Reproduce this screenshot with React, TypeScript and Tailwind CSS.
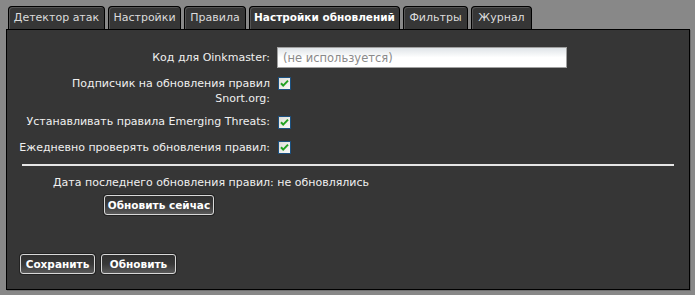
import React from 'react';

const FONT = { fontFamily: '"DejaVu Sans", Verdana, sans-serif' };

const TABS = [
  { label: 'Детектор атак', w: 'w-[97px]' },
  { label: 'Настройки', w: 'w-[73px]' },
  { label: 'Правила', w: 'w-[62px]' },
  { label: 'Настройки обновлений', w: 'w-[151px]', active: true },
  { label: 'Фильтры', w: 'w-[65px]' },
  { label: 'Журнал', w: 'w-[61px]' },
];

const Check: React.FC = () => (
  <svg width="13" height="13" viewBox="0 0 13 13" className="block">
    <defs>
      <linearGradient id="cbg" x1="0" y1="0" x2="1" y2="1">
        <stop offset="0" stopColor="#dcdcd6" />
        <stop offset="1" stopColor="#fbfbf9" />
      </linearGradient>
    </defs>
    <rect x="0.5" y="0.5" width="12" height="12" fill="url(#cbg)" stroke="#1c5180" />
    <path d="M3 6.2 L5.2 8.6 L10 3.6" fill="none" stroke="#21a121" strokeWidth="2" />
  </svg>
);

const Btn: React.FC<{ children: React.ReactNode; w: string }> = ({ children, w }) => (
  <button
    className={`${w} h-[20px] rounded-[3px] border border-[#d8d8d8] bg-gradient-to-b from-[#303030] via-[#383838] to-[#5a5a5a] text-[10.5px] font-bold text-white leading-none shadow-[0_0_0_1px_#222]`}
  >
    {children}
  </button>
);

const Row: React.FC<{ label: React.ReactNode; children: React.ReactNode; className?: string; center?: boolean }> = ({
  label,
  children,
  className = '',
  center,
}) => (
  <div className={`flex ${center ? 'items-center' : 'items-start'} ${className}`}>
    <div className="w-[264px] pr-[1px] text-right leading-[15px] text-[#f0f0f0]">{label}</div>
    <div className={`ml-[6px] ${center ? '' : 'pt-[1px] pl-[1px]'}`}>{children}</div>
  </div>
);

export default function App() {
  return (
    <div className="w-[695px] h-[295px] bg-[#888888] pt-[6px] pl-[6px] text-[11px]" style={FONT}>
      {/* tabs */}
      <div className="flex gap-[3px] pl-[2px]">
        {TABS.map((t) => (
          <div
            key={t.label}
            className={`${t.w} h-[23px] rounded-t-[4px] border border-b-0 border-black bg-[#363636] shadow-[inset_1px_1px_0_#555] flex items-center justify-center whitespace-nowrap ${
              t.active ? 'font-bold text-[10.5px] text-white' : 'text-[#dcdcdc]'
            }`}
          >
            {t.label}
          </div>
        ))}
      </div>

      {/* panel */}
      <div className="w-[684px] h-[261px] border border-black bg-[#363636] shadow-[1px_1px_0_#6e6e6e] flex flex-col">
        <Row label="Код для Oinkmaster:" className="mt-[17px] h-[21px]" center>
          <input
            readOnly
            placeholder="(не используется)"
            className="w-[290px] h-[21px] border border-[#a0a0a0] bg-gradient-to-b from-[#dfe4e8] via-white to-white px-[5px] text-[11.5px] text-black placeholder:text-[#8a8a8a] outline-none"
            style={FONT}
          />
        </Row>

        <Row label={<>Подписчик на обновления правил<br />Snort.org:</>} className="mt-[8px]">
          <Check />
        </Row>

        <Row label="Устанавливать правила Emerging Threats:" className="mt-[8px]">
          <div className="pt-[1px]">
            <Check />
          </div>
        </Row>

        <Row label="Ежедневно проверять обновления правил:" className="mt-[11px]">
          <Check />
        </Row>

        <div className="mx-[15px] mt-[9px] h-[2px] bg-[#e6e6e6]" />

        <div className="ml-[46px] mt-[9px] leading-[15px] text-[#f0f0f0] whitespace-nowrap">
          Дата последнего обновления правил: не обновлялись
        </div>

        <div className="ml-[97px] mt-[5px]">
          <Btn w="w-[110px]">Обновить сейчас</Btn>
        </div>

        <div className="flex gap-[6px] ml-[13px] mt-[39px]">
          <Btn w="w-[75px]">Сохранить</Btn>
          <Btn w="w-[75px]">Обновить</Btn>
        </div>
      </div>
    </div>
  );
}
